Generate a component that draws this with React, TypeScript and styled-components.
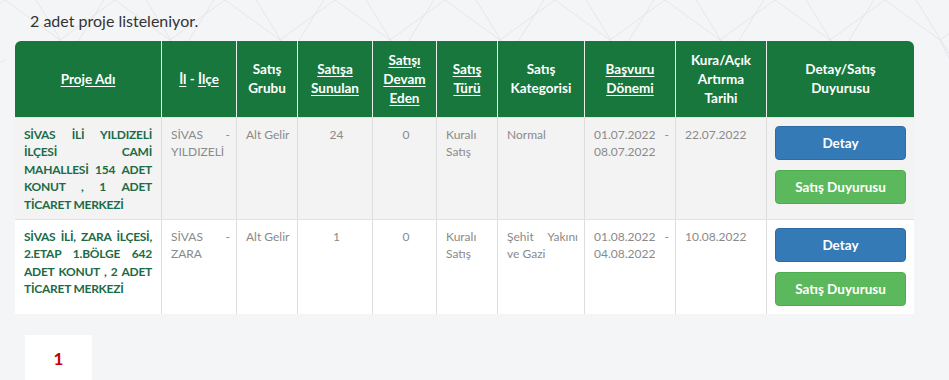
import React from "react";
import styled, { createGlobalStyle } from "styled-components";

const Global = createGlobalStyle`
  html, body { margin: 0; padding: 0; }
  body {
    background: #f4f5f7;
    font-family: Lato, "Open Sans", sans-serif;
    color: #333;
  }
`;

const Page = styled.div`
  position: relative;
  padding: 10px 35px 0 15px;
  overflow: hidden;
  height: 380px;
  box-sizing: border-box;
`;

const Pattern = styled.svg`
  position: absolute;
  left: 0;
  top: 0;
  width: 949px;
  height: 120px;
  z-index: 0;
  pointer-events: none;
`;

const Content = styled.div`
  position: relative;
  z-index: 1;
`;

const Summary = styled.div`
  margin: 0 0 10px 15px;
  font-size: 16px;
  line-height: 21px;
  color: #333;
`;

const Table = styled.table`
  width: 899px;
  border-collapse: separate;
  border-spacing: 0;
  table-layout: fixed;
`;

const HeadCell = styled.th<{ $last?: boolean; $first?: boolean }>`
  background: #17773c;
  color: #fff;
  font-weight: 700;
  font-size: 13.5px;
  line-height: 19px;
  text-align: center;
  vertical-align: middle;
  height: 76px;
  padding: 0 ${(p) => (p.$last ? "18px" : "5px")};
  box-sizing: border-box;
  border-right: ${(p) => (p.$last ? "none" : "1px solid #e8efe9")};
  border-top-left-radius: ${(p) => (p.$first ? "6px" : "0")};
  border-top-right-radius: ${(p) => (p.$last ? "6px" : "0")};
`;

const Sort = styled.span`
  text-decoration: underline;
  text-underline-offset: 2px;
`;

const Row = styled.tr<{ $alt?: boolean }>`
  background: ${(p) => (p.$alt ? "#f3f3f3" : "#ffffff")};
`;

const Cell = styled.td<{ $align?: string; $last?: boolean }>`
  vertical-align: top;
  padding: 8px 6px 6px 9px;
  font-size: 12px;
  line-height: 17.4px;
  color: #8a8a8a;
  text-align: ${(p) => p.$align || "justify"};
  text-align-last: ${(p) => (p.$align ? p.$align : "left")};
  border-right: ${(p) => (p.$last ? "none" : "1px solid #dedede")};
  border-top: 1px solid #e2e2e2;
`;

const NameCell = styled(Cell)`
  color: #1c6b47;
  font-weight: 700;
  letter-spacing: -0.25px;
  padding-left: 9px;
  padding-right: 9px;
`;

const ActionCell = styled(Cell)`
  padding: 8px 7px 8px 8px;
`;

const Buttons = styled.div`
  display: flex;
  flex-direction: column;
  gap: 10px;
`;

const Button = styled.button<{ $variant: "blue" | "green" }>`
  height: 34px;
  width: 131px;
  border: 1px solid ${(p) => (p.$variant === "blue" ? "#2e6da4" : "#4cae4c")};
  border-radius: 4px;
  background: ${(p) => (p.$variant === "blue" ? "#337ab7" : "#5cb85c")};
  color: #fff;
  font-family: Lato, "Open Sans", sans-serif;
  font-weight: 700;
  font-size: 13.5px;
  text-align: center;
  text-align-last: center;
  cursor: pointer;
  padding: 0;
`;

const Pagination = styled.div`
  display: flex;
  margin: 21px 0 0 10px;
`;

const PageItem = styled.div`
  width: 67px;
  height: 46px;
  background: #fff;
  color: #c00000;
  font-weight: 700;
  font-size: 17px;
  display: flex;
  align-items: center;
  justify-content: center;
`;

const cols = [147, 75, 61, 75, 64, 61, 87, 91, 91, 147];

const rows = [
  {
    name: "SİVAS İLİ YILDIZELİ İLÇESİ CAMİ MAHALLESİ 154 ADET KONUT , 1 ADET TİCARET MERKEZİ",
    loc: "SİVAS - YILDIZELİ",
    group: "Alt Gelir",
    offered: "24",
    ongoing: "0",
    type: "Kuralı Satış",
    cat: "Normal",
    period: "01.07.2022 - 08.07.2022",
    draw: "22.07.2022",
  },
  {
    name: "SİVAS İLİ, ZARA İLÇESİ, 2.ETAP 1.BÖLGE 642 ADET KONUT , 2 ADET TİCARET MERKEZİ",
    loc: "SİVAS - ZARA",
    group: "Alt Gelir",
    offered: "1",
    ongoing: "0",
    type: "Kuralı Satış",
    cat: "Şehit Yakını ve Gazi",
    period: "01.08.2022 - 04.08.2022",
    draw: "10.08.2022",
  },
];

function StarPattern() {
  const shapes = [];
  for (let i = -1; i < 10; i++) {
    const cx = i * 110 + 60;
    shapes.push(
      <g key={i} stroke="#e4e6ea" strokeWidth="1" fill="none">
        <path d={`M${cx - 55} 0 L${cx} 40 L${cx + 55} 0`} />
        <path d={`M${cx - 30} -10 L${cx + 10} 55 L${cx + 50} -10`} />
        <path d={`M${cx} 40 L${cx + 20} 80 L${cx + 55} 60`} />
      </g>
    );
  }
  return <Pattern viewBox="0 0 949 120">{shapes}</Pattern>;
}

export default function App() {
  return (
    <>
      <Global />
      <Page>
        <StarPattern />
        <Content>
          <Summary>2 adet proje listeleniyor.</Summary>
          <Table>
            <colgroup>
              {cols.map((w, i) => (
                <col key={i} style={{ width: w }} />
              ))}
            </colgroup>
            <thead>
              <tr>
                <HeadCell $first>
                  <Sort>Proje Adı</Sort>
                </HeadCell>
                <HeadCell>
                  <Sort>İl</Sort> - <Sort>İlçe</Sort>
                </HeadCell>
                <HeadCell>Satış Grubu</HeadCell>
                <HeadCell>
                  <Sort>Satışa Sunulan</Sort>
                </HeadCell>
                <HeadCell>
                  <Sort>Satışı Devam Eden</Sort>
                </HeadCell>
                <HeadCell>
                  <Sort>Satış Türü</Sort>
                </HeadCell>
                <HeadCell>Satış Kategorisi</HeadCell>
                <HeadCell>
                  <Sort>Başvuru Dönemi</Sort>
                </HeadCell>
                <HeadCell>Kura/Açık Artırma Tarihi</HeadCell>
                <HeadCell $last>Detay/Satış Duyurusu</HeadCell>
              </tr>
            </thead>
            <tbody>
              {rows.map((r, i) => (
                <Row key={i} $alt={i === 0}>
                  <NameCell>{r.name}</NameCell>
                  <Cell>{r.loc}</Cell>
                  <Cell>{r.group}</Cell>
                  <Cell $align="center">{r.offered}</Cell>
                  <Cell $align="center">{r.ongoing}</Cell>
                  <Cell>{r.type}</Cell>
                  <Cell>{r.cat}</Cell>
                  <Cell>{r.period}</Cell>
                  <Cell>{r.draw}</Cell>
                  <ActionCell $last>
                    <Buttons>
                      <Button $variant="blue">Detay</Button>
                      <Button $variant="green">Satış Duyurusu</Button>
                    </Buttons>
                  </ActionCell>
                </Row>
              ))}
            </tbody>
          </Table>
          <Pagination>
            <PageItem>1</PageItem>
          </Pagination>
        </Content>
      </Page>
    </>
  );
}
